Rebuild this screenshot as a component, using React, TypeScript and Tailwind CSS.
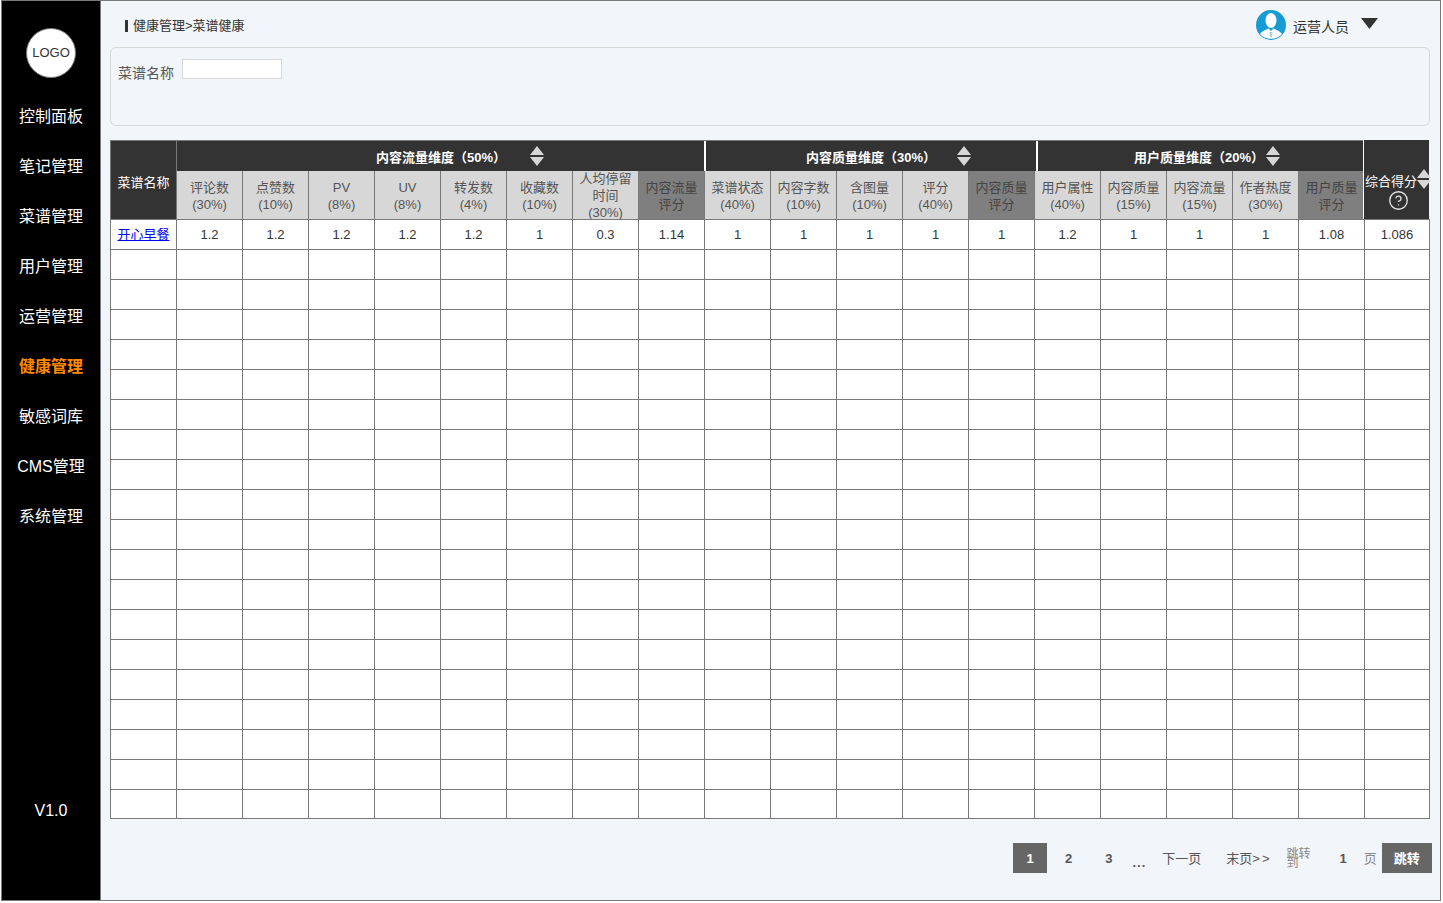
import { CircleHelp } from "lucide-react"

const menu = ["控制面板", "笔记管理", "菜谱管理", "用户管理", "运营管理", "健康管理", "敏感词库", "CMS管理", "系统管理"]

interface Col {
  lines: string[]
  score?: boolean
}

const cols: Col[] = [
  { lines: ["评论数", "(30%)"] },
  { lines: ["点赞数", "(10%)"] },
  { lines: ["PV", "(8%)"] },
  { lines: ["UV", "(8%)"] },
  { lines: ["转发数", "(4%)"] },
  { lines: ["收藏数", "(10%)"] },
  { lines: ["人均停留", "时间", "(30%)"] },
  { lines: ["内容流量", "评分"], score: true },
  { lines: ["菜谱状态", "(40%)"] },
  { lines: ["内容字数", "(10%)"] },
  { lines: ["含图量", "(10%)"] },
  { lines: ["评分", "(40%)"] },
  { lines: ["内容质量", "评分"], score: true },
  { lines: ["用户属性", "(40%)"] },
  { lines: ["内容质量", "(15%)"] },
  { lines: ["内容流量", "(15%)"] },
  { lines: ["作者热度", "(30%)"] },
  { lines: ["用户质量", "评分"], score: true },
]

const values = ["1.2", "1.2", "1.2", "1.2", "1.2", "1", "0.3", "1.14", "1", "1", "1", "1", "1", "1.2", "1", "1", "1", "1.08", "1.086"]
const emptyRows = Array.from({ length: 19 })

function SortIcon() {
  return (
    <svg width="14" height="20" viewBox="0 0 14 20" className="shrink-0">
      <path d="M7 0 L14 9 L0 9 Z" fill="#d7d7d7" />
      <path d="M0 11 L14 11 L7 20 Z" fill="#d7d7d7" />
    </svg>
  )
}

export default function App() {
  return (
    <div className="h-[903px] w-[1443px] bg-white font-['Liberation_Sans','Noto_Sans_CJK_SC',sans-serif]">
      <div className="ml-[1px] flex h-[901px] w-[1440px] border border-[#797979] bg-[#f2f5f9]">
        <aside className="flex w-[98px] shrink-0 flex-col items-center bg-black text-white">
          <div className="mt-[27px] flex h-[50px] w-[50px] items-center justify-center rounded-full border border-[#797979] bg-white text-[13px] text-[#333333]">
            LOGO
          </div>
          <nav className="mt-[14px] flex flex-col items-center">
            {menu.map((m) => (
              <div key={m} className={`flex h-[50px] items-center text-[16px] ${m === "健康管理" ? "font-bold text-[#ff8a00]" : ""}`}>
                {m}
              </div>
            ))}
          </nav>
          <div className="mt-auto mb-[77px] text-[16px]">V1.0</div>
        </aside>

        <main className="flex min-w-0 flex-1 flex-col border-l border-[#797979] pl-[9px]">
          <header className="flex h-[46px] shrink-0 items-start justify-between text-[#333333]">
            <div className="mt-[16px] flex items-center gap-[5px] text-[13px]">
              <span className="ml-[15px] h-[12px] w-[3px] bg-[#333333]" />
              <span className="-mt-[1px]">健康管理&gt;菜谱健康</span>
            </div>
            <div className="mt-[9px] mr-[62px] flex items-start">
              <svg width="30" height="30" viewBox="0 0 30 30">
                <circle cx="15" cy="15" r="15" fill="#169bd5" />
                <ellipse cx="15" cy="10.5" rx="5.5" ry="7.5" fill="#fff" />
                <path d="M4 24 C6.5 20.5 10 20 12.5 18.5 L15 21 L17.5 18.5 C20 20 23.5 20.5 26 24 C23 27.5 19.5 28.8 15 28.8 C10.5 28.8 7 27.5 4 24 Z" fill="#fff" />
                <path d="M13.5 22 L16.5 22 L16 27 L14 27 Z" fill="#9fd4ec" />
              </svg>
              <span className="ml-[7px] mt-[7px] text-[14px]">运营人员</span>
              <svg width="17" height="11" viewBox="0 0 17 11" className="ml-[12px] mt-[8px]">
                <path d="M0 0 H17 L8.5 11 Z" fill="#333333" />
              </svg>
            </div>
          </header>

          <section className="h-[79px] w-[1320px] shrink-0 rounded-[6px] border border-[#d7d7d7]">
            <div className="ml-[7px] mt-[11px] flex items-start text-[14px] text-[#555555]">
              <span className="mt-[4px]">菜谱名称</span>
              <input className="ml-[8px] h-[20px] w-[100px] border border-[#d7d7d7] bg-white" />
            </div>
          </section>

          {/* 表头 */}
          <div className="mt-[14px] flex h-[79px] w-[1319px] shrink-0 text-[13px]">
            <div className="flex w-[67px] shrink-0 items-center justify-center border border-b-0 border-[#797979] bg-[#333333] pt-[5px] text-white">
              菜谱名称
            </div>
            <div className="flex w-[1186px] shrink-0 flex-col overflow-hidden">
              <div className="flex h-[31px] shrink-0 border-t border-[#797979] bg-[#333333] font-bold text-white">
                <div className="flex w-[529px] shrink-0 items-center gap-[24px] border-r-2 border-white pl-[199px]">
                  <span className="mt-[3px]">内容流量维度（50%）</span>
                  <SortIcon />
                </div>
                <div className="flex w-[332px] shrink-0 items-center gap-[21px] border-r-2 border-white pl-[100px]">
                  <span className="mt-[3px]">内容质量维度（30%）</span>
                  <SortIcon />
                </div>
                <div className="flex w-[325px] shrink-0 items-center gap-[2px] pl-[96px]">
                  <span className="mt-[3px]">用户质量维度（20%）</span>
                  <SortIcon />
                </div>
              </div>
              <div className="flex h-[48px] shrink-0">
                {cols.map((c, i) => (
                  <div
                    key={i}
                    className={`flex w-[66px] shrink-0 flex-col items-center justify-center overflow-hidden border-r border-[#797979] leading-[17px] ${c.lines.length === 2 ? "pt-[2px]" : ""} ${c.score ? "bg-[#7f7f7f] text-[#444444]" : "bg-[#d7d7d7] text-[#555555]"}`}
                  >
                    {c.lines.map((l) => (
                      <span key={l}>{l}</span>
                    ))}
                  </div>
                ))}
              </div>
            </div>
            <div className="relative flex w-[66px] shrink-0 flex-col border-l border-white bg-[#333333] pt-[33px] text-white">
              <span className="ml-[1px] whitespace-nowrap leading-[17px]">综合得分</span>
              <span className="absolute left-[53px] top-[29px]">
                <SortIcon />
              </span>
              <CircleHelp size={21} strokeWidth={1.5} className="ml-[24px] text-[#e6e6e6]" />
            </div>
          </div>

          <table className="w-[1319px] table-fixed border-collapse text-[13px] text-[#333333]">
            <colgroup>
              {values.map((_, i) => (
                <col key={i} className="w-[66px]" />
              ))}
              <col className="w-[65px]" />
            </colgroup>
            <tbody>
              <tr className="h-[30px] bg-white">
                <td className="border border-[#797979] p-0 text-center">
                  <a href="#" className="text-[#0000ee] underline">
                    开心早餐
                  </a>
                </td>
                {values.map((v, i) => (
                  <td key={i} className="border border-[#797979] p-0 text-center">
                    {v}
                  </td>
                ))}
              </tr>
              {emptyRows.map((_, r) => (
                <tr key={r} className={`bg-white ${r === 18 ? "h-[29px]" : "h-[30px]"}`}>
                  {values.concat("").map((_, i) => (
                    <td key={i} className="border border-[#797979] p-0" />
                  ))}
                </tr>
              ))}
            </tbody>
          </table>

          <div className="mt-[24px] flex h-[30px] items-center text-[13px] font-bold text-[#555555]">
            <div className="ml-[903px] flex h-[30px] w-[34px] items-center justify-center bg-[#666666] pt-[2px] text-white">1</div>
            <span className="ml-[18px] mt-[2px]">2</span>
            <span className="ml-[33px] mt-[2px]">3</span>
            <span className="ml-[20px] mt-[10px] tracking-[1px]">...</span>
            <span className="ml-[16px] mt-[2px] font-normal">下一页</span>
            <span className="ml-[25px] mt-[2px] font-normal">末页<span className="tracking-[2px]">&gt;&gt;</span></span>
            <span className="ml-[15px] mt-[2px] w-[24px] text-[12px] leading-[9px] font-normal text-[#888888]">跳转到</span>
            <span className="ml-[29px] mt-[2px]">1</span>
            <span className="ml-[17px] mt-[2px] font-normal text-[#888888]">页</span>
            <div className="ml-[5px] flex h-[30px] w-[50px] shrink-0 items-center justify-center bg-[#666666] pt-[2px] text-white">跳转</div>
          </div>
        </main>
      </div>
    </div>
  )
}
